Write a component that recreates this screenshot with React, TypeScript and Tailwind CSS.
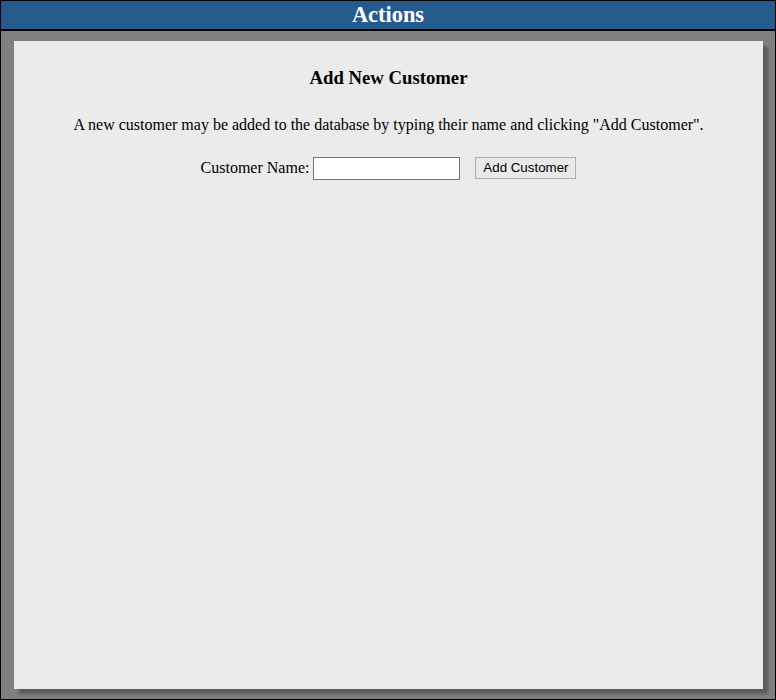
export default function App() {
  return (
    <div className="flex flex-col h-[700px] w-[776px] border border-black bg-[#808080] font-['Liberation_Serif',serif]">
      <div className="h-[30px] bg-[#255a8f] border-b-2 border-black flex items-center justify-center">
        <h1 className="text-[22.4px] font-bold text-white leading-none">Actions</h1>
      </div>
      <div className="flex-1 flex flex-col pt-[10px] pb-[10px] pl-[13px] pr-[12px]">
        <div className="flex-1 bg-[#ebebeb] shadow-[5px_5px_3px_#5a5a5a] flex flex-col items-center pt-[26px]">
          <h3 className="text-[18.72px] font-bold text-black leading-[22px]">Add New Customer</h3>
          <p className="mt-[27px] text-[16px] text-black leading-[18px]">
            A new customer may be added to the database by typing their name and clicking "Add Customer".
          </p>
          <div className="mt-[22px] flex items-center text-[16px] text-black">
            <label htmlFor="cust">Customer Name:</label>
            <input
              id="cust"
              type="text"
              className="ml-[4px] w-[147px] h-[23px] bg-white border border-[#767676] px-1 text-[13px] outline-none"
            />
            <button className="ml-[15px] h-[22px] w-[101px] bg-[#e9e9e9] border border-[#adadad] text-[13.33px] font-['Liberation_Sans',sans-serif] text-black leading-none">
              Add Customer
            </button>
          </div>
        </div>
      </div>
    </div>
  );
}
